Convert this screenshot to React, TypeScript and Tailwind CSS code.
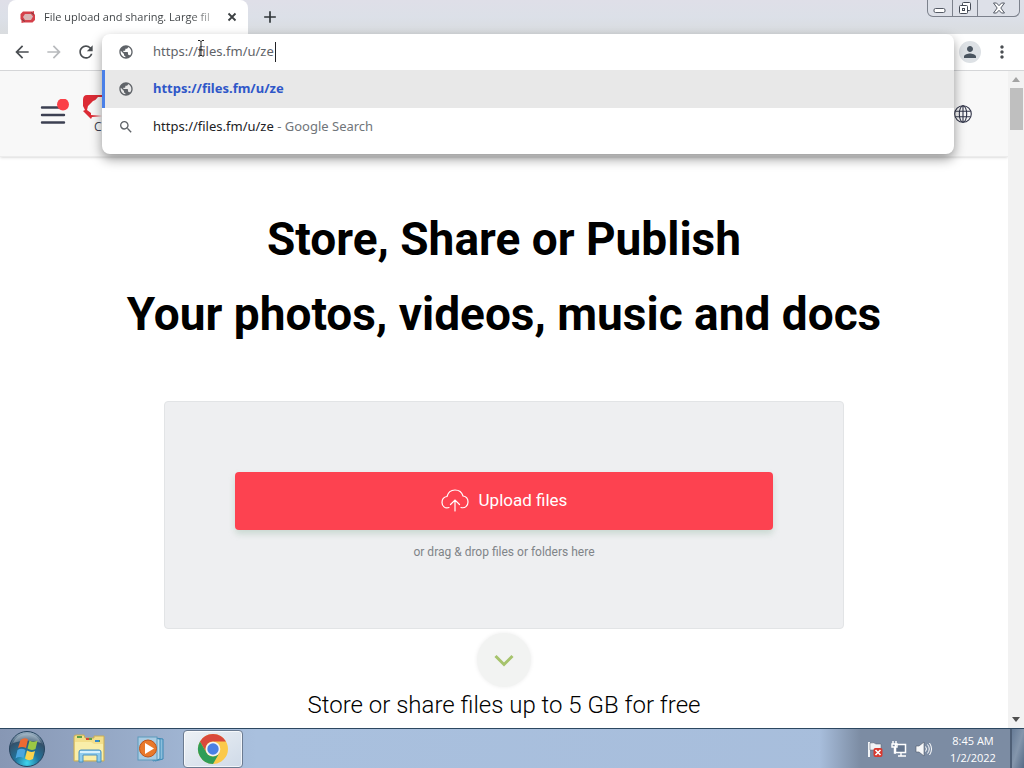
import React from "react";
import { MdPublic, MdSearch, MdPerson, MdMoreVert, MdArrowBack, MdArrowForward, MdRefresh, MdAdd } from "react-icons/md";

function WindowControls() {
  const btn = "flex items-center justify-center border-r border-[#7c818c]";
  return (
    <div className="flex h-[17px] rounded-b-md border border-t-0 border-[#7c818c] bg-[#dde0e8] self-start mr-1">
      <button aria-label="Minimize" className={btn + " w-[25px]"}>
        <svg width="14" height="16" viewBox="0 0 14 16"><rect x="1" y="8.5" width="11" height="4" rx="1.5" fill="#fff" stroke="#555b66" /></svg>
      </button>
      <button aria-label="Restore" className={btn + " w-[25px]"}>
        <svg width="14" height="16" viewBox="0 0 14 16" fill="#fff" stroke="#454b56">
          <rect x="4.5" y="2.5" width="8" height="8" rx="1" />
          <rect x="1.5" y="5.5" width="8" height="8" rx="1" />
          <rect x="4.5" y="8.5" width="2" height="2" />
        </svg>
      </button>
      <button aria-label="Close window" className="flex w-[41px] items-center justify-center">
        <svg width="14" height="14" viewBox="0 0 14 14"><path d="M1.5 2h3L7 4.7 9.500 2h3L8.800 7l3.700 5h-3L7 9.300 4.500 12h-3L5.200 7z" fill="#fff" stroke="#555b66" /></svg>
      </button>
    </div>
  );
}

function TabStrip() {
  return (
    <header className="flex h-[34px] shrink-0 items-end bg-linear-to-b from-[#dfdfe8] via-[#dce0e8] to-[#d9dcdf]">
      <div className="ml-2 flex h-full w-60 items-center rounded-t-lg bg-white pr-2 pl-3">
        <svg width="16" height="14" viewBox="0 0 16 14" className="mr-2 shrink-0">
          <path d="M3 1.500h9.500L14 1v2.500l1 1.500v5l-2.500 2.500H4L1.500 13v-2.500L.5 9V4z" fill="#d5404a" />
          <path d="M5 4h6l2 2.500-2 3.500H5L3 7z" fill="#d9b5b5" />
          <path d="M2 9.500l3 2M11 2.500l3 2" stroke="#7b3d42" />
        </svg>
        <span className="flex-1 bg-linear-to-r from-[#3c4043] from-85% to-[#d0d0d0] bg-clip-text text-[11px] whitespace-nowrap text-transparent">
          File upload and sharing. Large fil
        </span>
        <button aria-label="Close tab" className="ml-2 flex h-4 w-4 items-center justify-center">
          <svg width="10" height="10" viewBox="0 0 10 10" stroke="#3c4043" strokeWidth="1.800"><path d="m1.500 1.500 7 7m0-7-7 7" /></svg>
        </button>
      </div>
      <button aria-label="New tab" className="ml-2 flex h-full w-7 items-center justify-center text-[#2f3539]"><MdAdd size={20} /></button>
      <div className="flex-1" />
      <WindowControls />
    </header>
  );
}

function Omnibox() {
  const row = "flex h-[38px] w-full items-center text-left text-[13px]";
  return (
    <div className="relative flex-1 self-stretch font-['Noto_Sans',sans-serif]">
      <div className="absolute inset-x-0 top-0 z-20 overflow-hidden rounded-lg bg-white pb-2 shadow-[0_5px_12px_rgba(0,0,0,0.4)]">
        <div className="relative flex h-9 items-center">
          <span className="flex w-12 justify-center text-[#5f6368]"><MdPublic size={16} /></span>
          <input aria-label="Address and search bar" defaultValue="https://files.fm/u/ze" className="ml-[3px] min-w-0 flex-1 text-[13px] text-[#5f6368] outline-none" />
          <span className="pointer-events-none absolute top-2 left-[173px] h-5 w-px bg-[#202124]" />
          <svg className="pointer-events-none absolute top-1.5 left-[95px]" width="8" height="17" viewBox="0 0 8 17" fill="none" stroke="#222"><path d="M1 .5h2l1 1 1-1h2M4 1v14M1 16h2l1-1 1 1h2M2 10h4" /></svg>
        </div>
        <button className={row + " bg-[#e8e8e8]"}>
          <span className="h-full w-[3px] bg-[#4a80e8]" />
          <span className="flex w-[42px] justify-center text-[#5f6368]"><MdPublic size={16} /></span>
          <span className="ml-1.5 font-bold text-[#2f57c8]">https://files.fm/u/ze</span>
        </button>
        <button className={row}>
          <span className="flex w-12 justify-center text-[#5f6368]"><MdSearch size={16} /></span>
          <span className="ml-[3px] text-[#202124]">https://files.fm/u/ze<span className="text-[#70757a]"> - Google Search</span></span>
        </button>
      </div>
    </div>
  );
}

function Toolbar() {
  const btn = "flex h-8 w-8 items-center justify-center";
  return (
    <nav className="flex h-[37px] shrink-0 items-center border-b border-[#d5d6d8] bg-white px-1.5">
      <button aria-label="Back" className={btn + " text-[#4a4e52]"}><MdArrowBack size={20} /></button>
      <button aria-label="Forward" className={btn + " text-[#b8babd]"}><MdArrowForward size={20} /></button>
      <button aria-label="Reload" className={btn + " text-[#4a4e52]"}><MdRefresh size={20} /></button>
      <Omnibox />
      <button aria-label="Profile" className={btn}><span className="flex h-[22px] w-[22px] items-center justify-center rounded-full bg-[#dde1e5] text-[#4a5560]"><MdPerson size={18} /></span></button>
      <button aria-label="Menu" className={btn + " text-[#4a4e52]"}><MdMoreVert size={20} /></button>
    </nav>
  );
}

function SiteHeader() {
  return (
    <div className="flex h-[86px] items-center justify-between border-b border-[#ececec] bg-[#f8f8f8] pr-9 pl-10 shadow-sm">
      <div className="flex items-center">
        <button aria-label="Open menu">
          <svg width="30" height="30" viewBox="0 0 30 30">
            <path d="M2 8.500h22M2 16h22M2 23.500h22" stroke="#3c4052" strokeWidth="2.400" strokeLinecap="round" />
            <circle cx="23" cy="5.500" r="6" fill="#fb4048" />
          </svg>
        </button>
        <a href="#" aria-label="files.fm" className="ml-3 flex flex-col text-[#3c4052]">
          <svg width="36" height="27" viewBox="0 0 36 27">
            <path d="M5 2h24q5 0 5 5v10q0 6-7 6h-7v-3h6l5-6V9l-4-5H16q-2 3-5 4l-5 5-1 4 4 3v2l11 1-10 1-1 2-8-8 2-1-2-4V7q0-5 4-5" fill="#dc2b35" />
          </svg>
          <span className="ml-3 text-xs leading-[14px]">Cloud</span>
        </a>
      </div>
      <button aria-label="Language">
        <svg width="18" height="18" viewBox="0 0 18 18" fill="none" stroke="#303448" strokeWidth="1.100">
          <circle cx="9" cy="9" r="8.300" /><ellipse cx="9" cy="9" rx="3.700" ry="8.300" /><path d="M9 .7v16.600M1.500 6.200h15M1.500 11.800h15" />
        </svg>
      </button>
    </div>
  );
}

function SitePage() {
  return (
    <main className="flex min-w-0 flex-1 flex-col overflow-hidden bg-white">
      <SiteHeader />
      <div className="flex flex-col items-center font-[Roboto,sans-serif] text-black">
        <h1 className="mt-[45px] text-center text-[46px] leading-[75px] font-bold">
          Store, Share or Publish<br />Your photos, videos, music and docs
        </h1>
        <section className="mt-[49px] flex h-[228px] w-full max-w-[680px] flex-col items-center rounded border border-[#e2e4e6] bg-[#eeeff1] px-[70px] pt-[70px]">
          <button className="flex h-[58px] w-full shrink-0 items-center justify-center rounded bg-[#fd4250] text-[17px] text-white shadow-[0_4px_6px_rgba(150,185,165,0.4)]">
            <svg width="28" height="24" viewBox="0 0 28 24" fill="none" stroke="currentColor" strokeWidth="1.200" strokeLinecap="round" className="mr-2.5">
              <path d="M8 18.500C4 20 1 17 1 13.500 1 10 3 8 6 7.500 7 3.500 10 1 14 1s7 2.500 8 6c3 .5 5 3 5 6 0 4-3 6.500-7 5.500M14 22V11M9.500 15.500 14 11l4.500 4.500" />
            </svg>
            Upload files
          </button>
          <p className="mt-3 text-xs leading-5 text-[#808488]">or drag &amp; drop files or folders here</p>
        </section>
        <button aria-label="Scroll down" className="mt-1 flex h-[54px] w-[54px] items-center justify-center rounded-full bg-[#f2f3f2] shadow-[0_0_4px_rgba(0,0,0,0.08)]">
          <svg width="20" height="14" viewBox="0 0 20 14" fill="none" stroke="#a6c36c" strokeWidth="3"><path d="m1.500 3 8.500 8.500L18.500 3" /></svg>
        </button>
        <h2 className="text-2xl leading-9 font-light">Store or share files up to 5 GB for free</h2>
      </div>
    </main>
  );
}

function Scrollbar() {
  return (
    <div className="flex w-4 shrink-0 flex-col items-center bg-[#f2f2f2] py-1.5">
      <svg width="8" height="5" viewBox="0 0 8 5"><path d="M0 5 4 0l4 5z" fill="#a3a3a3" /></svg>
      <div className="mt-1.5 h-[42px] w-[13px] bg-[#bfbfbf]" />
      <div className="flex-1" />
      <svg width="8" height="5" viewBox="0 0 8 5"><path d="M0 0h8L4 5z" fill="#4f4f4f" /></svg>
    </div>
  );
}

function StartOrb() {
  return (
    <svg width="38" height="38" viewBox="0 0 38 38">
      <defs>
        <radialGradient id="orb" cx="50%" cy="90%" r="85%"><stop offset="0" stopColor="#3dd6ee" /><stop offset=".4" stopColor="#21749c" /><stop offset=".8" stopColor="#345069" /><stop offset="1" stopColor="#91a8bb" /></radialGradient>
      </defs>
      <circle cx="19" cy="19" r="17.500" fill="url(#orb)" stroke="#26445f" />
      <path d="M5 13a15 15 0 0 1 28 0q-14-5-28 0" fill="#c7d6e1" opacity=".4" />
      <path d="M12.500 10q4-3 7.500-.5L18 18q-4-2-8 0z" fill="#ec6a33" />
      <path d="M21.500 10.500q4 2.500 8 0l-2 8.500q-4 2-8-.5z" fill="#9bc844" />
      <path d="M9.500 20q4-2.500 8 0l-2 8q-4-2-8 .5z" fill="#4ba6df" />
      <path d="M19 20.500q4 2.500 8 .5l-2 8q-4 2.500-8-.5z" fill="#fbd44e" />
    </svg>
  );
}

function ExplorerIcon() {
  return (
    <svg width="34" height="30" viewBox="0 0 34 30">
      <path d="M2 3q0-2 2-2h8l1 3h9V2h10v25H2z" fill="#f3df8b" stroke="#c9ad57" />
      <path d="M5 3h5M14 5h6M23 7h5" stroke="#5b9e49" strokeWidth="2" />
      <path d="M14 5h3" stroke="#d74532" strokeWidth="2" /><path d="M23 7h4" stroke="#3789c9" strokeWidth="2" />
      <path d="M3 8h16l3 2h9v16H3z" fill="#f9eea9" />
      <path d="M7 28V18q0-2 2-2h18q2 0 2 2v10h-4v-7H11v7z" fill="#8dcbed" stroke="#4b91bd" />
      <path d="M8 18h20" stroke="#d6f1fc" strokeWidth="2" />
    </svg>
  );
}

function MediaIcon() {
  return (
    <svg width="28" height="26" viewBox="0 0 28 26">
      <path d="m18 2 8 1v20l-8 2z" fill="#8cbedc" stroke="#3988b5" />
      <path d="m16 2 7 1v20l-7 2z" fill="#bbdced" stroke="#3988b5" />
      <rect x="1" y="1" width="19" height="23" fill="#a9cce3" stroke="#5c9abc" />
      <circle cx="11" cy="12.500" r="8.500" fill="#e9792b" stroke="#bd541b" />
      <path d="m8 7 9 5.500L8 18z" fill="#fff" />
    </svg>
  );
}

function ChromeIcon() {
  return (
    <svg width="32" height="32" viewBox="0 0 32 32">
      <circle cx="16" cy="16" r="15" fill="#fbc94a" />
      <path d="M3 8.500A15 15 0 0 1 29 8.500H16A7.500 7.500 0 0 0 9.500 19.750z" fill="#d9493c" />
      <path d="M3 8.500 9.500 19.750A7.500 7.500 0 0 0 22.500 19.750L16 31A15 15 0 0 1 3 8.500" fill="#2f9d57" />
      <circle cx="16" cy="16" r="7.300" fill="#f4f4f4" /><circle cx="16" cy="16" r="5.700" fill="#4a80e4" />
    </svg>
  );
}

function Taskbar() {
  return (
    <footer className="flex h-10 shrink-0 items-center border-t border-[#2c4760] bg-linear-to-r from-[#8797b4] via-[#a9c0de] via-25% to-[#a7bddb] pl-2">
      <button aria-label="Start"><StartOrb /></button>
      <button aria-label="Windows Explorer" className="ml-[26px] flex w-[34px] justify-center"><ExplorerIcon /></button>
      <button aria-label="Windows Media Player" className="ml-[31px] flex w-[28px] justify-center"><MediaIcon /></button>
      <button aria-label="Google Chrome" className="ml-[18px] flex h-[38px] w-[60px] items-center justify-center rounded-sm border border-[#6b7b91] bg-linear-to-br from-[#edf1f5] to-[#cfdae8] ring-1 ring-white/70 ring-inset"><ChromeIcon /></button>
      <div className="flex-1" />
      <div className="flex h-full items-center bg-linear-to-r from-[#a7bddb] to-[#7c8ca3] to-20% pl-[46px]">
        <svg width="18" height="18" viewBox="0 0 18 18">
          <path d="M3 2v15" stroke="#fff" strokeWidth="1.800" /><path d="M4 3q4-1 6 1h5v7q-5 1-6-1H4z" fill="#f2f4f7" stroke="#59616e" strokeWidth=".5" />
          <rect x="7.500" y="8" width="9" height="9" rx="2" fill="#d8392f" /><path d="m9.500 10 5 5m0-5-5 5" stroke="#fff" strokeWidth="1.600" />
        </svg>
        <svg width="18" height="18" viewBox="0 0 18 18" className="ml-1.5" fill="none">
          <rect x="5.500" y="4.500" width="10" height="8" fill="#64758d" stroke="#fff" strokeWidth="1.500" />
          <path d="M8 16h8M11 13v3M3 1v3M6 1v3M2 4h5v3H2zM4.500 7v6H6" stroke="#fff" strokeWidth="1.400" />
        </svg>
        <svg width="18" height="18" viewBox="0 0 18 18" className="ml-1.5" fill="none">
          <path d="M2 6h3l5-4v14l-5-4H2z" fill="#f6f7f8" stroke="#4d5868" strokeWidth=".6" />
          <path d="M11.500 6.500q2 2.500 0 5M13.500 4.500q3.500 4.500 0 9M15.500 3q4 6 0 12" stroke="#fff" />
        </svg>
        <div className="w-[78px] pl-1 text-center text-[11px] leading-[17px] text-white">8:45 AM<br />1/2/2022</div>
        <button aria-label="Show desktop" className="h-full w-3.5 border-l-2 border-[#4e5f76] bg-linear-to-br from-[#667b96] via-[#8496ac] to-[#566b86]" />
      </div>
    </footer>
  );
}

export default function App() {
  return (
    <div className="flex h-screen flex-col overflow-hidden bg-white font-['Open_Sans','Noto_Sans',sans-serif]">
      <TabStrip />
      <Toolbar />
      <div className="flex min-h-0 flex-1">
        <SitePage />
        <Scrollbar />
      </div>
      <Taskbar />
    </div>
  );
}
